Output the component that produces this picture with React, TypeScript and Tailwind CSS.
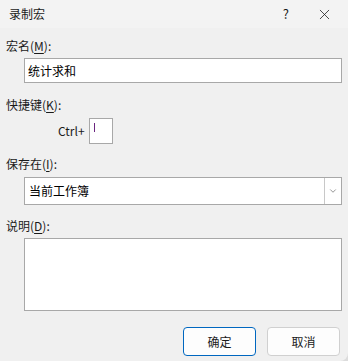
import { ChevronDown, X } from 'lucide-react'

const font = { fontFamily: '"Segoe UI", "Noto Sans CJK SC", "Noto Sans", sans-serif' }

function Label({ text, hotkey }: { text: string; hotkey: string }) {
  return (
    <div className="h-[14px] pl-[6px] text-[12px] leading-[14px] text-[#1a1a1a]">
      {text}(<span className="underline underline-offset-2">{hotkey}</span>):
    </div>
  )
}

export default function App() {
  return (
    <div className="h-[361px] w-[348px] overflow-hidden bg-[#dcdcdc]" style={font}>
      <div className="flex h-full flex-col rounded-br-[8px] bg-[#f0f0f0]">
        <div className="flex h-[28px] items-center bg-[#f3f3f3] pl-[9px]">
          <span className="text-[12px] text-[#1a1a1a]">录制宏</span>
          <span className="ml-auto mr-[27px] text-[13px] text-[#1a1a1a]">?</span>
          <X className="mr-[15px] h-[17px] w-[17px] text-[#1a1a1a]" strokeWidth={1.1} />
        </div>

        <div className="flex flex-col pt-[11px]">
          <Label text="宏名" hotkey="M" />
          <div className="ml-[24px] mt-[5px] flex h-[25px] w-[318px] items-center border border-[#a8a8a8] bg-white pl-[3px] text-[12px] text-black">
            统计求和
          </div>

          <div className="mt-[15px]">
            <Label text="快捷键" hotkey="K" />
          </div>
          <div className="ml-[58px] mt-[6px] flex items-center gap-[4px]">
            <span className="text-[12px] text-[#1a1a1a]">Ctrl+</span>
            <div className="flex h-[26px] w-[24px] items-start border border-[#a8a8a8] bg-white pl-[4px] pt-[4px]">
              <div className="h-[9px] w-px bg-[#6b2580]" />
            </div>
          </div>

          <div className="mt-[13px]">
            <Label text="保存在" hotkey="I" />
          </div>
          <div className="ml-[24px] mt-[6px] flex h-[28px] w-[318px] items-center border border-[#a8a8a8] bg-white text-[12px] text-black">
            <span className="pl-[4px]">当前工作簿</span>
            <div className="ml-auto flex h-full w-[17px] items-center justify-center border-l border-[#c8c8c8]">
              <ChevronDown className="h-[10px] w-[10px] text-[#555]" strokeWidth={1.5} />
            </div>
          </div>

          <div className="mt-[14px]">
            <Label text="说明" hotkey="D" />
          </div>
          <div className="ml-[24px] mt-[5px] h-[73px] w-[318px] border border-[#a8a8a8] bg-white" />

          <div className="mr-[8px] mt-[16px] flex justify-end gap-[11px]">
            <button className="h-[29px] w-[73px] rounded-[4px] border border-[#0067c0] bg-[#fdfdfd] text-[12px] text-[#1a1a1a]">
              确定
            </button>
            <button className="h-[29px] w-[73px] rounded-[4px] border border-[#d0d0d0] bg-[#fdfdfd] text-[12px] text-[#1a1a1a]">
              取消
            </button>
          </div>
        </div>
      </div>
    </div>
  )
}
